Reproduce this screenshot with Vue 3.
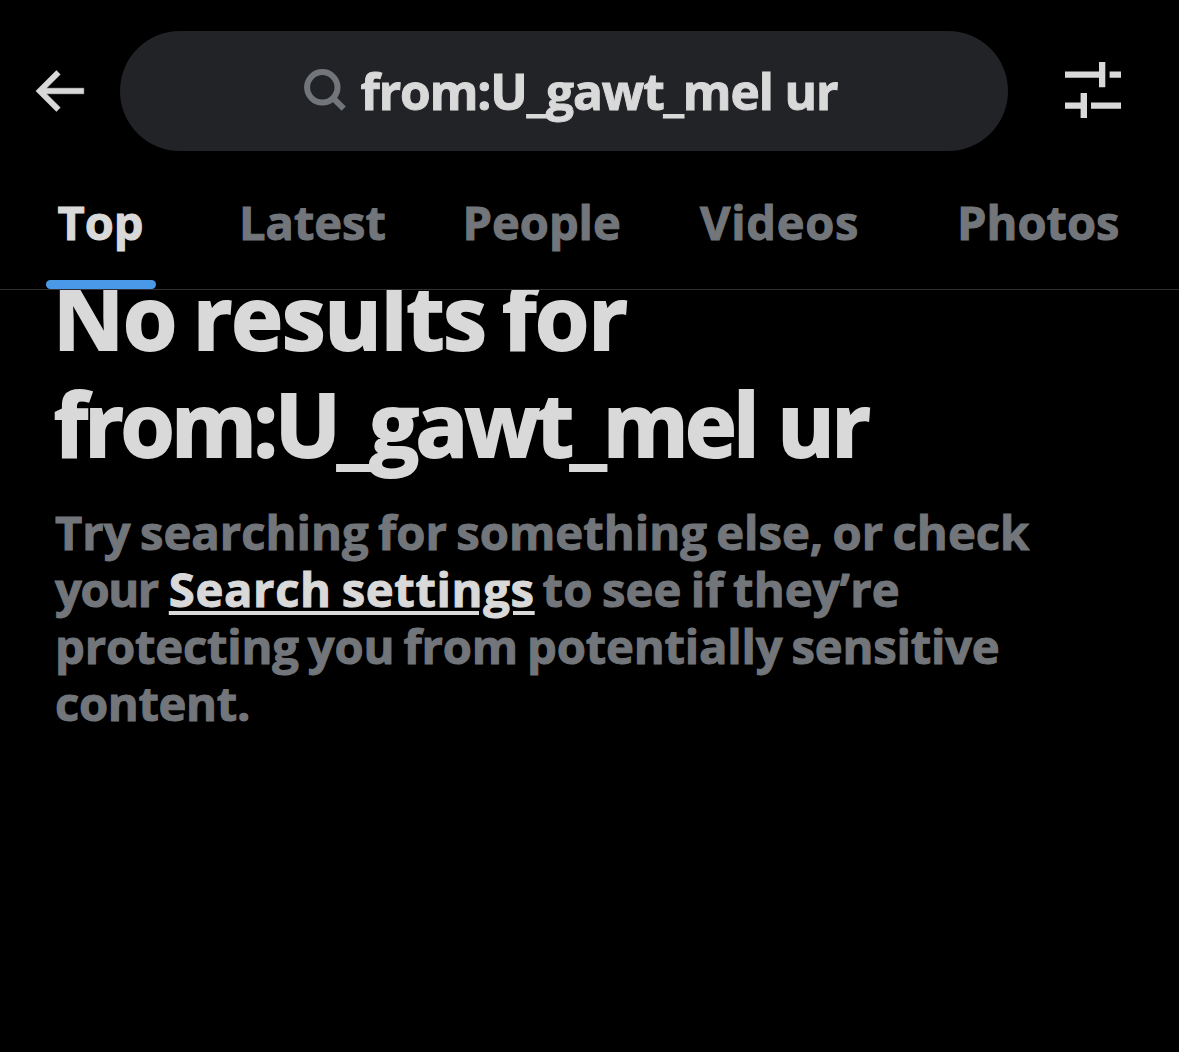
<template>
  <div class="search-page">
    <header class="top-bar">
      <svg class="back-icon" viewBox="0 0 24 24">
        <path d="M7.414 13l5.043 5.04-1.414 1.42L3.586 12l7.457-7.46 1.414 1.42L7.414 11H21v2H7.414z" />
      </svg>
      <div class="search-box">
        <svg class="search-icon" viewBox="0 0 42 42">
          <circle cx="18.3" cy="18.3" r="15.2" />
          <path d="M28.6 28.6L39.7 39.7" />
        </svg>
        <span class="query">{{ query }}</span>
      </div>
      <svg class="filter-icon" viewBox="0 0 56 56">
        <path d="M0 9.5h34V0h6.3v25.3H34v-9.5H0zM44.6 9.5H56v6.3H44.6zM0 40.4h15.6v-9.5h6.4v25.1h-6.4v-9.3H0zM26 40.4h30v6.3H26z" />
      </svg>
    </header>

    <nav class="tabs">
      <div
        v-for="tab in tabs"
        :key="tab"
        :class="['tab', tab.toLowerCase(), { active: tab === activeTab }]"
        @click="activeTab = tab"
      >
        {{ tab }}
      </div>
    </nav>

    <main class="results">
      <h1>
        <span class="title-first">No results for</span>
        <span class="title-query">{{ query }}</span>
      </h1>
      <p>
        <span class="line line-1">Try searching for something else, or check</span>
        <span class="line line-2"><span class="your">your </span><a>Search settings</a><span class="rest"> to see if they’re</span></span>
        <span class="line line-3">protecting you from potentially sensitive</span>
        <span class="line line-4">content.</span>
      </p>
    </main>
  </div>
</template>

<script setup>
import { ref } from 'vue'

const query = ref('from:U_gawt_mel ur')
const tabs = ['Top', 'Latest', 'People', 'Videos', 'Photos']
const activeTab = ref('Top')
</script>

<style>
body {
  background: #000;
}
</style>

<style scoped>
.search-page {
  height: 1052px;
  overflow: hidden;
  background: #000;
  color: #d9d9d9;
  font-family: 'Open Sans', 'Noto Sans', sans-serif;
  font-weight: 700;
  -webkit-text-stroke: 1px currentColor;
}

.top-bar {
  display: flex;
  align-items: center;
  height: 120px;
  padding: 31px 58.5px 0 26px;
}

.back-icon {
  width: 66px;
  height: 66px;
  margin: -1px 28px 0 0;
  fill: #d9d9d9;
  stroke: #d9d9d9;
  stroke-width: 0.2;
}

.search-box {
  display: flex;
  align-items: center;
  justify-content: center;
  box-sizing: border-box;
  width: 888px;
  height: 120px;
  padding-left: 13px;
  border-radius: 60px;
  background: #222327;
}

.search-icon {
  width: 42px;
  height: 42px;
  margin: -2px 15px 0 0;
  fill: none;
  stroke: #72767b;
  stroke-width: 6;
}

.query {
  font-size: 49.6px;
  line-height: 60px;
  letter-spacing: -1.1px;
  white-space: nowrap;
}

.filter-icon {
  width: 56px;
  height: 56px;
  margin: -2px 0 0 auto;
  fill: #d9d9d9;
}

.tabs {
  display: grid;
  grid-template-columns: 181.5px 223.5px 237.5px 257px auto;
  box-sizing: border-box;
  height: 139px;
  padding: 39px 0 0 57.5px;
  border-bottom: 1px solid #2f3036;
}

.tab {
  position: relative;
  color: #72767b;
  font-size: 47px;
  line-height: 65px;
  cursor: pointer;
}

.tab.videos {
  letter-spacing: 0.7px;
}

.tab.active {
  color: #d9d9d9;
}

.tab.active::after {
  content: '';
  position: absolute;
  left: -11.5px;
  bottom: 0;
  width: 110px;
  height: 9px;
  border-radius: 5px;
  background: #4a99e9;
}

.results {
  overflow: hidden;
  padding: 0 52px 20px 55px;
}

h1 {
  margin: -27px 0 27px -1px;
  font-size: 87.5px;
  line-height: 107px;
  -webkit-text-stroke-width: 2px;
}

h1 span {
  display: block;
  white-space: nowrap;
}

.title-first {
  margin-left: -1px;
  letter-spacing: -1.1px;
  word-spacing: -5px;
}

.title-query {
  letter-spacing: -3.6px;
  word-spacing: 2px;
}

p {
  margin: 0;
  color: #72767b;
  font-size: 47.2px;
  line-height: 57px;
  word-spacing: -3px;
}

.line {
  display: block;
  white-space: nowrap;
}

.line-1 {
  letter-spacing: 0.02px;
}

.line-3 {
  letter-spacing: -0.19px;
}

.line-4 {
  letter-spacing: -0.35px;
}

.your {
  letter-spacing: -1.4px;
  word-spacing: 0;
}

.rest {
  margin-left: -1.5px;
  letter-spacing: 0.12px;
}

a {
  color: #d9d9d9;
  letter-spacing: 0.65px;
  text-decoration: underline;
  text-decoration-thickness: 4px;
  text-underline-offset: 4px;
}
</style>
